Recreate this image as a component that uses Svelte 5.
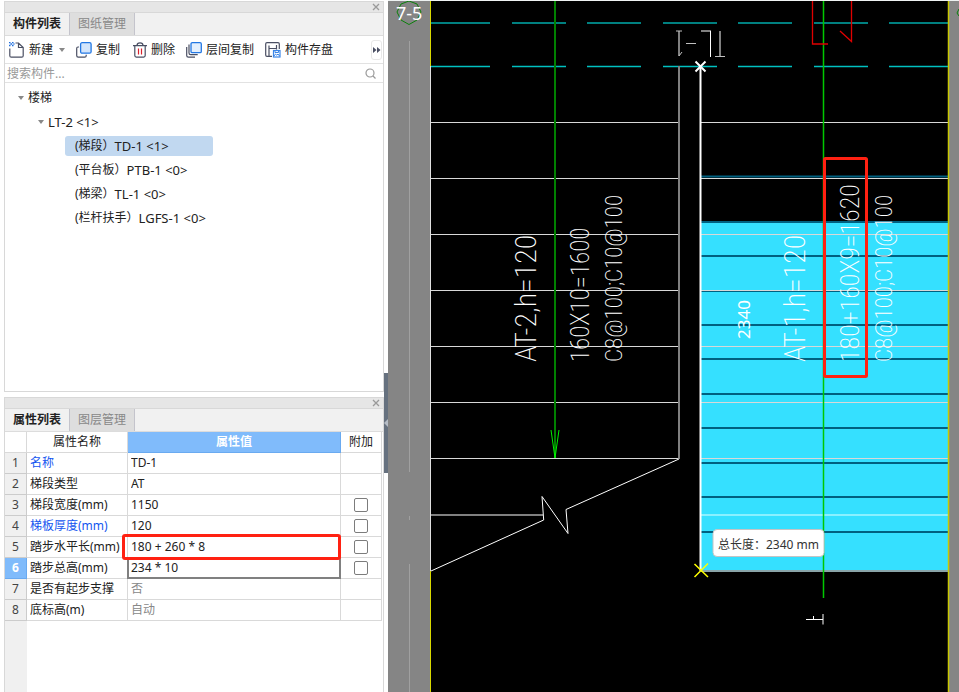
<script>
    let search = $state('');
    let selected = $state('TD-1 <1>');

    const members = [
        { kind: '(梯段）', name: 'TD-1 <1>' },
        { kind: '(平台板）', name: 'PTB-1 <0>' },
        { kind: '(梯梁）', name: 'TL-1 <0>' },
        { kind: '(栏杆扶手）', name: 'LGFS-1 <0>' }
    ];

    let props = $state([
        { label: '名称', value: 'TD-1', key: true },
        { label: '梯段类型', value: 'AT' },
        { label: '梯段宽度(mm)', value: '1150', extra: true },
        { label: '梯板厚度(mm)', value: '120', key: true, extra: true },
        { label: '踏步水平长(mm)', value: '180 + 260 * 8', extra: true, marked: true },
        { label: '踏步总高(mm)', value: '234 * 10', extra: true, active: true },
        { label: '是否有起步支撑', value: '否', muted: true },
        { label: '底标高(m)', value: '自动', muted: true }
    ]);

    // drawing geometry
    const treads = [122, 178, 234, 290, 346, 402, 458];
    const steps = [222, 256, 291, 325, 359, 394, 428, 463, 497, 532];
    const dashes = [[431, 490], [512, 566], [587, 641], [663, 717], [738, 792], [814, 868], [889, 948]];
    const notes = [
        { x: 536, size: 30, text: 'AT-2,h=120' },
        { x: 589, size: 25, text: '160X10=1600' },
        { x: 622, size: 23, text: 'C8@100;C10@100' },
        { x: 805, size: 30, text: 'AT-1,h=120' },
        { x: 859, size: 26, text: '180+160X9=1620' },
        { x: 892, size: 23, text: 'C8@100;C10@100' }
    ];
</script>

{#snippet closeButton()}
    <button class="close" aria-label="关闭">
        <svg width="8" height="8" viewBox="0 0 8 8"><path d="M1 1l6 6M7 1l-6 6" stroke="#9a9a9a" stroke-width="1.3" /></svg>
    </button>
{/snippet}

<main class="app">
    <aside class="sidebar">
        <section class="panel">
            <div class="titlebar">{@render closeButton()}</div>
            <div class="tabs">
                <button class="tab active">构件列表</button>
                <button class="tab">图纸管理</button>
            </div>
            <div class="toolbar">
                <button class="tool new">
                    <svg width="16" height="16" viewBox="0 0 16 16" fill="none">
                        <path d="M.8 6.5v7.2q0 1.5 1.5 1.5h10.4q1.5 0 1.5-1.5V5.5L9.5 1H6.5M9.5 1v4.5h4.7" stroke="#4a4f63" stroke-width="1.2" />
                        <path d="M0 .5h1.500M3 .5h1.500M1.500 2h1.500M0 3.500h1.500M3 3.500h1.500M4.500 2h1" stroke="#1f6fe0" stroke-width="1.500" />
                    </svg>
                    新建
                    <i class="caret"></i>
                </button>
                <button class="tool copy">
                    <svg width="16" height="16" viewBox="0 0 16 16" fill="none">
                        <path d="M3 5H2Q.7 5 .7 6.500v7Q.7 15.200 2.200 15.200h6.500q1.500 0 1.500-1.500v-1" stroke="#4a4f63" stroke-width="1.2" />
                        <rect x="4.600" y=".7" width="10.500" height="10.500" rx="1.500" fill="#d3e5fb" stroke="#2277e3" stroke-width="1.3" />
                    </svg>
                    复制
                </button>
                <button class="tool del">
                    <svg width="14" height="16" viewBox="0 0 14 16" fill="none">
                        <path d="M0 3.600h14M4 3.500Q4 .8 7 .8t3 2.700M1.800 3.600v10q0 1.500 1.500 1.500h7.400q1.500 0 1.500-1.500v-10" stroke="#4a4f63" stroke-width="1.2" />
                        <path d="M5.500 6.500v6M8.500 6.500v6" stroke="#d9232e" stroke-width="1.2" />
                    </svg>
                    删除
                </button>
                <button class="tool layer">
                    <svg width="16" height="16" viewBox="0 0 16 16" fill="none">
                        <path d="M.7 5v8.500q0 1.700 1.700 1.700H9M3 2.500v8.500q0 1.700 1.700 1.700h7" stroke="#4a4f63" stroke-width="1.2" />
                        <rect x="5" y=".7" width="10.300" height="10" rx="1.300" fill="#e3effd" stroke="#2277e3" stroke-width="1.3" />
                    </svg>
                    层间复制
                </button>
                <button class="tool">
                    <svg width="16" height="16" viewBox="0 0 16 16" fill="none">
                        <path d="M7 14.300H2Q.7 14.300.7 13V2Q.7.7 2 .7h11q1.300 0 1.300 1.300v5M4 3.500v11M4 6.500h7.500M11.500 3v4.500" stroke="#4a4f63" stroke-width="1.2" />
                        <rect x="8.500" y="8.500" width="6.500" height="6.500" fill="#fff" stroke="#3b86e8" stroke-width="1.2" />
                        <path d="M10 8.500v2h3.500v-2M9 14l1.500-2 1.300 1.200L13 12l1.500 2" stroke="#3b86e8" />
                    </svg>
                    构件存盘
                </button>
                <button class="more" aria-label="更多">
                    <svg width="8" height="6" viewBox="0 0 8 6" fill="#4a4f63"><path d="M0 0l3.500 3L0 6zM4 0l3.500 3L4 6z" /></svg>
                </button>
            </div>
            <label class="search">
                <input bind:value={search} placeholder="搜索构件..." aria-label="搜索构件" />
                <svg width="11" height="11" viewBox="0 0 11 11" fill="none" stroke="#9a9a9a" stroke-width="1.2">
                    <circle cx="5" cy="5" r="4" /><path d="M8 8l2.500 2.500" />
                </svg>
            </label>
            <div class="tree">
                <button class="node root"><i class="caret"></i>楼梯</button>
                <button class="node group"><i class="caret"></i><span class="code">LT-2 &lt;1&gt;</span></button>
                {#each members as m}
                    <button class="node leaf" class:selected={selected === m.name} onclick={() => (selected = m.name)}>
                        <span>{m.kind}</span><span class="code">{m.name}</span>
                    </button>
                {/each}
            </div>
        </section>

        <section class="panel">
            <div class="titlebar">{@render closeButton()}</div>
            <div class="tabs">
                <button class="tab active">属性列表</button>
                <button class="tab">图层管理</button>
            </div>
            <div class="sheet">
                <table>
                    <thead>
                        <tr>
                            <th class="corner"></th>
                            <th class="name">属性名称</th>
                            <th class="value">属性值</th>
                            <th class="extra">附加</th>
                        </tr>
                    </thead>
                    <tbody>
                        {#each props as p, i}
                            <tr class:active={p.active}>
                                <th class="index">{i + 1}</th>
                                <td class="label" class:key={p.key}>{p.label}</td>
                                <td class="field" class:marked={p.marked} class:muted={p.muted}>
                                    <input bind:value={p.value} aria-label={p.label} />
                                </td>
                                <td class="check">
                                    {#if p.extra}<input type="checkbox" aria-label="附加 {p.label}" />{/if}
                                </td>
                            </tr>
                        {/each}
                    </tbody>
                </table>
            </div>
        </section>
    </aside>

    <div class="splitter">
        <button class="handle" aria-label="收起">
            <svg width="4" height="8" viewBox="0 0 4 8"><path d="M4 0v8L0 4z" fill="#b5bcc5" /></svg>
        </button>
    </div>

    <svg class="drawing" viewBox="388 0 571 692" preserveAspectRatio="xMinYMin slice" fill="none">
        <rect x="388" y="0" width="571" height="692" fill="#858585" />
        <rect x="431" y="0" width="517" height="692" fill="#000" />
        <rect x="701" y="222" width="247" height="349" fill="#35e0ff" />

        <!-- axis bubble -->
        <path d="M409.500 41v431M409.500 516v4M409.500 564v128" stroke="#a0a0a0" />
        <path d="M409 1l8 3 4 8-4 8-8 4.500-8-4.500-4-8 4-8zM959 9l-2 4 2 3" stroke="#0a800a" />
        <text class="axis" x="396" y="20">7-5</text>

        {#each dashes as [a, b]}
            <path d="M{a} 23H{b}" stroke="#008080" stroke-width="2" />
            <path d="M{a} 66.500H{b}" stroke="#00c0c0" stroke-width="1.500" />
        {/each}

        <!-- step edges of the flight -->
        <path d="M701 176.500H948" stroke="#006080" stroke-width="2" />
        {#each steps as y}
            <path d="M701 {y}H948" stroke="#006080" stroke-width="2" />
        {/each}

        {#each treads as y}
            <path d="M431 {y + 0.5}H679M701 {y + 0.5}H948" stroke="#d8d8d8" />
        {/each}
        <path d="M431 515H543" stroke="#808080" stroke-width="2" />
        <path d="M701 515H948" stroke="#8af0ff" stroke-width="2" />
        <path d="M701 571H948" stroke="#8aa4a8" stroke-width="2" />

        <path d="M430.500 1V66M430.500 571V692" stroke="#d8d800" />
        <path d="M948.500 1V692" stroke="#c8c800" stroke-width="1.500" />
        <path d="M430.500 66V571" stroke="#e0e0e0" />
        <path d="M679 66V459" stroke="#808080" stroke-width="2" />
        <path d="M431 571L543.700 520 542 496.500 568 533.500 566 509.500 679 459" stroke="#fff" />

        <path d="M555 1V458" stroke="#008000" stroke-width="2" />
        <path d="M551 430L555 458 559 430" stroke="#00f000" />
        <path d="M823.500 1V598" stroke="#00c800" stroke-width="1.500" />

        <!-- red section mark and cut marks -->
        <path d="M812.500 1V44H828M851.500 1V41.500L840 31" stroke="#e00000" stroke-width="1.300" />
        <path d="M679 31V56M720 31V57M701 31H711" stroke="#808080" stroke-width="2" />
        <path d="M676 31H682M679 56L682 52M686 43.500H696M715 56.500H725" stroke="#c0c0c0" />
        <path d="M710.500 31V57M806 619.500H823M823 614V624.500M813.500 616V619" stroke="#fff" />

        {#each notes as n}
            <text class="note" font-size={n.size} transform="translate({n.x} 362) rotate(-90)">{n.text}</text>
        {/each}
        <text class="dim" transform="translate(750 339) rotate(-90)">2340</text>

        <path d="M700.500 66V571" stroke="#fff" stroke-width="2" />
        <path d="M695.500 61.500L705.500 71.500M705.500 61.500L695.500 71.500" stroke="#fff" stroke-width="2" />
        <path d="M694.500 564L708 577M708 563.500L694.500 577" stroke="#ff0" stroke-width="1.500" />

        <rect x="824.500" y="158.500" width="42" height="218" rx="1" stroke="#ff2112" stroke-width="3" />

        <rect x="713" y="529.500" width="111" height="27" rx="4" fill="#fff" stroke="#c4c4c4" />
        <text class="tip" x="718" y="549">总长度：2340 mm</text>
        <path d="M388 .5H959" stroke="#eef2f2" />
    </svg>
</main>

<style>
    :global(body) {
        margin: 0;
    }
    .app {
        display: grid;
        grid-template-columns: 384px 4px minmax(0, 1fr);
        height: 100vh;
        overflow: hidden;
        background: #fff;
        color: #222;
        font: 12px/20px "Noto Sans", "Noto Sans CJK SC", sans-serif;
    }
    button, input {
        margin: 0;
        padding: 0;
        border: 0;
        border-radius: 0;
        background: none;
        color: inherit;
        font: inherit;
    }
    svg {
        display: block;
        flex: none;
    }
    .sidebar {
        display: grid;
        grid-template-rows: minmax(0, 391fr) minmax(0, 295fr);
        gap: 5px;
        padding: 1px 0 0 4px;
        box-sizing: border-box;
        height: 100vh;
    }
    .panel {
        display: flex;
        flex-direction: column;
        min-height: 0;
        border: 1px solid #d8d8d8;
        box-sizing: border-box;
    }
    .panel:last-child {
        border-bottom: 0;
    }
    .titlebar {
        display: flex;
        align-items: center;
        justify-content: flex-end;
        height: 10px;
        padding-right: 3px;
        border-bottom: 1px solid #d8d8d8;
        background: #e6e6e6;
    }
    .tabs {
        display: flex;
        height: 22px;
        border-bottom: 1px solid #dcdcdc;
        background: #f1f1f1;
    }
    .tab {
        width: 65px;
        border-right: 1px solid #c4c4cc;
        background: #dedede;
        color: #888;
    }
    .tab.active {
        background: #f1f1f1;
        color: #222;
        font-weight: 700;
    }
    .toolbar {
        display: flex;
        align-items: center;
        height: 27px;
        padding: 0 1px 0 4px;
        border-bottom: 1px solid #e2e2e2;
    }
    .tool {
        display: flex;
        align-items: center;
        gap: 4px;
        margin-right: 11px;
        padding-top: 1px;
    }
    .caret {
        border: 3px solid transparent;
        border-top: 4px solid #888;
        border-bottom: 0;
    }
    .new .caret {
        margin-left: 2px;
    }
    .copy {
        margin-right: 13px;
    }
    .more {
        display: flex;
        align-items: center;
        justify-content: center;
        width: 11px;
        height: 20px;
        margin-left: auto;
        border: 1px solid #e8e8e8;
        border-radius: 3px;
    }
    .search {
        display: flex;
        align-items: center;
        height: 18px;
        padding: 0 7px 0 2px;
        border-bottom: 1px solid #e2e2e2;
    }
    .search input {
        flex: 1;
        height: 18px;
        padding-top: 1px;
        box-sizing: border-box;
    }
    .search input::placeholder {
        color: #999;
    }
    .tree {
        display: flex;
        flex-direction: column;
        align-items: flex-start;
        gap: 4px;
        padding-top: 5px;
    }
    .node {
        display: flex;
        align-items: center;
        height: 20px;
        border-radius: 3px;
    }
    .node .caret {
        margin-right: 4px;
    }
    .code {
        font-size: 13px;
    }
    .root {
        margin-left: 13px;
    }
    .group {
        margin-left: 33px;
    }
    .leaf {
        width: 148px;
        margin-left: 60px;
        padding-left: 10px;
        white-space: nowrap;
    }
    .selected {
        background: #c1d8f0;
    }
    .sheet {
        flex: 1;
        background: linear-gradient(to right, #f0f0f0 22px, #fff 22px);
    }
    table {
        width: 100%;
        padding-right: 1px;
        border-spacing: 0;
        table-layout: fixed;
    }
    th, td {
        height: 20px;
        padding: 0;
        border: solid #d9d9d9;
        border-width: 0 1px 1px 0;
        font-weight: 400;
        line-height: 20px;
        white-space: nowrap;
    }
    .corner {
        width: 21px;
        background: #fff;
    }
    .name {
        width: 100px;
    }
    .extra {
        width: 40px;
    }
    .value {
        background: #80bbfb;
        border-color: #6aaaf0;
        color: #fff;
        font-weight: 700;
    }
    .index {
        background: #f0f0f0;
        border-color: #ccc;
        color: #444;
    }
    .label {
        padding-left: 3px;
    }
    .key {
        color: #1456f0;
    }
    .field {
        position: relative;
    }
    .field input {
        display: block;
        width: 100%;
        height: 20px;
        padding-left: 3px;
        box-sizing: border-box;
    }
    .muted {
        color: #888;
    }
    .active .index {
        background: #80bbfb;
        border-color: #6aaaf0;
        color: #fff;
        font-weight: 700;
    }
    .active .field input {
        outline: 2px solid #808080;
        outline-offset: -1px;
    }
    .marked::after {
        content: '';
        position: absolute;
        inset: -3px -1px -3px -6px;
        z-index: 1;
        border: 3px solid #ff2112;
        border-radius: 3px;
        pointer-events: none;
    }
    .check input {
        appearance: none;
        display: block;
        width: 14px;
        height: 14px;
        margin: 0 auto;
        border: 1px solid #7c7c7c;
        border-radius: 2px;
        background: #fff;
    }
    .splitter {
        display: flex;
        align-items: center;
        padding-top: 154px;
        box-sizing: border-box;
    }
    .handle {
        display: flex;
        align-items: center;
        width: 4px;
        height: 100px;
        background: #66717f;
    }
    .drawing {
        width: 100%;
        height: 100vh;
    }
    .axis, .note, .dim {
        fill: #fff;
    }
    .axis {
        font-size: 18px;
    }
    .note {
        font-family: "Liberation Sans Narrow", "Roboto Condensed", Lato, sans-serif;
        font-weight: 200;
    }
    .dim {
        font-size: 17px;
    }
    .tip {
        fill: #333;
        font-size: 12px;
    }
</style>
